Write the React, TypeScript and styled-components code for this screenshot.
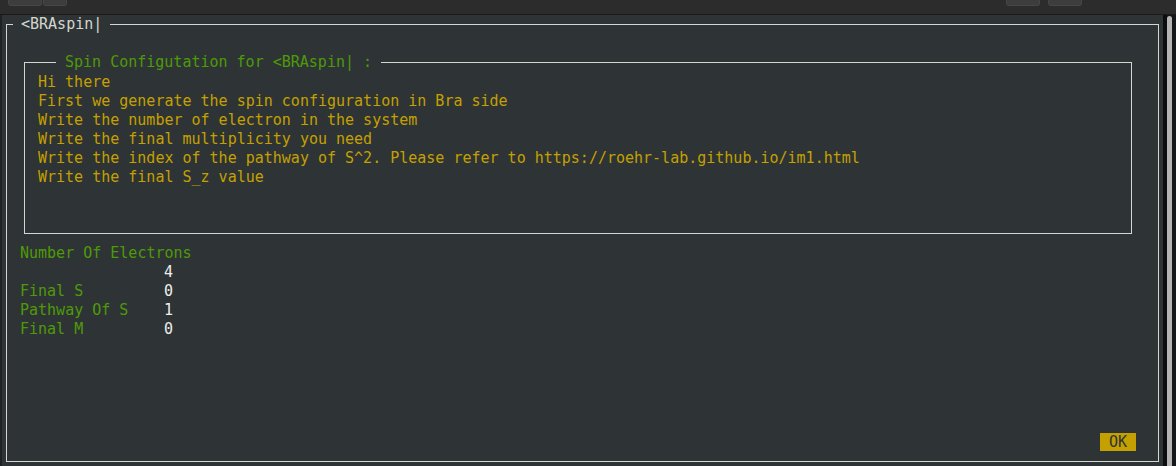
import React from "react";
import styled, { createGlobalStyle } from "styled-components";

const GlobalStyle = createGlobalStyle`
  html, body {
    margin: 0;
    padding: 0;
    background: #2b2b2b;
  }
  * {
    box-sizing: border-box;
  }
`;

const messages = [
  "Hi there",
  "First we generate the spin configuration in Bra side",
  "Write the number of electron in the system",
  "Write the final multiplicity you need",
  "Write the index of the pathway of S^2. Please refer to https://roehr-lab.github.io/im1.html",
  "Write the final S_z value",
];

const fields = [
  { label: "Number Of Electrons", value: "" },
  { label: "", value: "4" },
  { label: "Final S", value: "0" },
  { label: "Pathway Of S", value: "1" },
  { label: "Final M", value: "0" },
];

const App = () => {
  return (
    <Window>
      <GlobalStyle />
      <TopBar>
        <TabGroup>
          <TabButton />
          <TabButton />
        </TabGroup>
        <TabGroup>
          <TabButton />
          <TabButton />
        </TabGroup>
      </TopBar>
      <Body>
        <Terminal>
          <Frame $grow>
            <Legend $inset={6} $pad={8} $color="#d3d7cf">
              &lt;BRAspin|
            </Legend>
            <OuterBody>
              <Frame>
                <Legend $inset={31} $pad={9} $color="#4e9a06">
                  Spin Configutation for &lt;BRAspin| :
                </Legend>
                <MessageBox>
                  {messages.map((m) => (
                    <Line key={m}>{m}</Line>
                  ))}
                </MessageBox>
              </Frame>
              <FieldList>
                {fields.map((f, i) => (
                  <FieldRow key={i}>
                    <FieldLabel>{f.label}</FieldLabel>
                    <FieldValue>{f.value}</FieldValue>
                  </FieldRow>
                ))}
              </FieldList>
              <Footer>
                <OkButton type="button">OK</OkButton>
              </Footer>
            </OuterBody>
          </Frame>
        </Terminal>
        <Scroller>
          <ScrollGap />
          <ScrollThumb />
        </Scroller>
      </Body>
    </Window>
  );
};

const Window = styled.div`
  display: flex;
  flex-direction: column;
  width: 1176px;
  height: 466px;
  overflow: hidden;
  background: #2b2b2b;
  font-family: "DejaVu Sans Mono", "Liberation Mono", monospace;
  font-size: 15px;
`;

const TopBar = styled.div`
  display: flex;
  justify-content: space-between;
  height: 15px;
  padding: 0 94px 0 8px;
  background: #2c2c2c;
  border-bottom: 1px solid #1a1a1a;
`;

const TabGroup = styled.div`
  display: flex;
  gap: 1px;
  &:last-child {
    gap: 8px;
  }
`;

const TabButton = styled.div`
  width: 34px;
  height: 6px;
  background: #3d3d3d;
  border: 1px solid #464646;
  border-top: none;
  border-radius: 0 0 3px 3px;
  &:nth-child(2) {
    width: 24px;
  }
  ${TabGroup}:last-child &:nth-child(2) {
    width: 34px;
  }
`;

const Body = styled.div`
  display: flex;
  flex: 1;
  min-height: 0;
`;

const Terminal = styled.div`
  display: flex;
  flex-direction: column;
  width: 1163px;
  background: #2e3436;
  border-left: 2px solid #1e2224;
  padding: 0 4px 4px 4px;
  line-height: 19px;
`;

const Frame = styled.fieldset<{ $grow?: boolean }>`
  display: flex;
  flex-direction: column;
  flex: ${(p) => (p.$grow ? 1 : "none")};
  min-height: 0;
  margin: 0;
  padding: 0;
  min-width: 0;
  border: 1px solid #d3d7cf;
`;

const Legend = styled.legend<{ $inset: number; $pad: number; $color: string }>`
  margin-left: ${(p) => p.$inset}px;
  padding: 0 ${(p) => p.$pad}px;
  color: ${(p) => p.$color};
  line-height: 19px;
  white-space: pre;
`;

const OuterBody = styled.div`
  display: flex;
  flex-direction: column;
  flex: 1;
  padding: 19px 26px 10px 17px;
`;

const MessageBox = styled.div`
  display: flex;
  flex-direction: column;
  height: 161px;
  padding: 1px 0 0 13px;
`;

const Line = styled.div`
  color: #c4a000;
  white-space: pre;
`;

const FieldList = styled.div`
  display: flex;
  flex-direction: column;
  margin: 10px 0 0 -4px;
`;

const FieldRow = styled.div`
  display: grid;
  grid-template-columns: 144px auto;
  height: 19px;
`;

const FieldLabel = styled.span`
  color: #4e9a06;
  white-space: pre;
  overflow: visible;
`;

const FieldValue = styled.span`
  color: #eeeeec;
`;

const Footer = styled.div`
  display: flex;
  justify-content: flex-end;
  margin-top: auto;
  margin-right: -4px;
`;

const OkButton = styled.button`
  width: 36px;
  height: 18px;
  padding: 0;
  border: none;
  background: #c4a000;
  color: #2e3436;
  font-family: inherit;
  font-size: 15px;
  line-height: 18px;
`;

const Scroller = styled.div`
  display: flex;
  flex: 1;
  background: #14181b;
`;

const ScrollGap = styled.div`
  width: 4px;
  background: #0b0d0f;
`;

const ScrollThumb = styled.div`
  width: 5px;
  margin-top: 1px;
  background: #b4b4b4;
  border-radius: 3px 3px 0 0;
`;

export default App;
